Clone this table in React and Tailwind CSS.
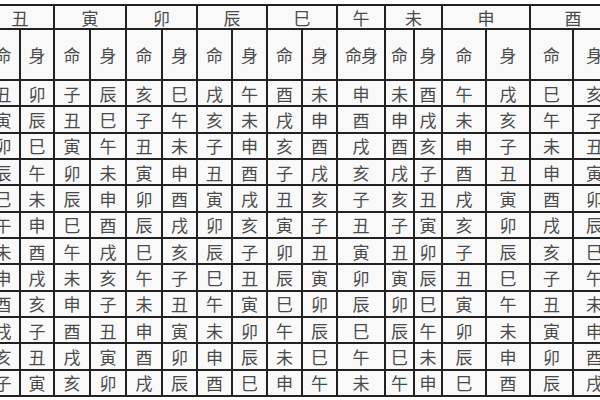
import React from "react";

const groups = [
    ["丑", 2], ["寅", 2], ["卯", 2], ["辰", 2], ["巳", 2],
    ["午", 1], ["未", 2], ["申", 2], ["酉", 2],
];

const rows = [
    "丑卯子辰亥巳戌午酉未申未酉午戌巳亥",
    "寅辰丑巳子午亥未戌申酉申戌未亥午子",
    "卯巳寅午丑未子申亥酉戌酉亥申子未丑",
    "辰午卯未寅申丑酉子戌亥戌子酉丑申寅",
    "巳未辰申卯酉寅戌丑亥子亥丑戌寅酉卯",
    "午申巳酉辰戌卯亥寅子丑子寅亥卯戌辰",
    "未酉午戌巳亥辰子卯丑寅丑卯子辰亥巳",
    "申戌未亥午子巳丑辰寅卯寅辰丑巳子午",
    "酉亥申子未丑午寅巳卯辰卯巳寅午丑未",
    "戌子酉丑申寅未卯午辰巳辰午卯未寅申",
    "亥丑戌寅酉卯申辰未巳午巳未辰申卯酉",
    "子寅亥卯戌辰酉巳申午未午申巳酉辰戌",
];

const cell = "bg-[#f9f9f9] flex items-center justify-center text-[#4a4a4a]";

export default function App() {
    return (
        <div
            className="w-[600px] h-[400px] overflow-hidden bg-white"
            style={{fontFamily: '"Noto Sans CJK SC", "Noto Sans CJK JP", sans-serif'}}
        >
            <div
                className="mt-[4px] ml-[-15px] w-max grid gap-[2px] p-[2px] bg-[#222222] text-[17px] leading-none grid-cols-[32px_32px_34px_34px_34px_33px_33px_33px_33px_33px_46px_27px_26px_42px_42px_41px_41px] grid-rows-[22px_49px_repeat(12,24.33px)]"
            >
                {groups.map(([name, span]) => (
                    <div key={name} className={`${cell} ${span === 2 ? "col-span-2" : "col-span-1"}`}>
                        {name}
                    </div>
                ))}

                {groups.map(([name, span]) =>
                    span === 2 ? (
                        <React.Fragment key={name}>
                            <div className={cell}>命</div>
                            <div className={cell}>身</div>
                        </React.Fragment>
                    ) : (
                        <div key={name} className={`${cell} tracking-[-1px]`}>命身</div>
                    )
                )}

                {rows.map((row, r) =>
                    Array.from(row).map((ch, c) => (
                        <div key={`${r}-${c}`} className={cell}>{ch}</div>
                    ))
                )}
            </div>
        </div>
    );
}
